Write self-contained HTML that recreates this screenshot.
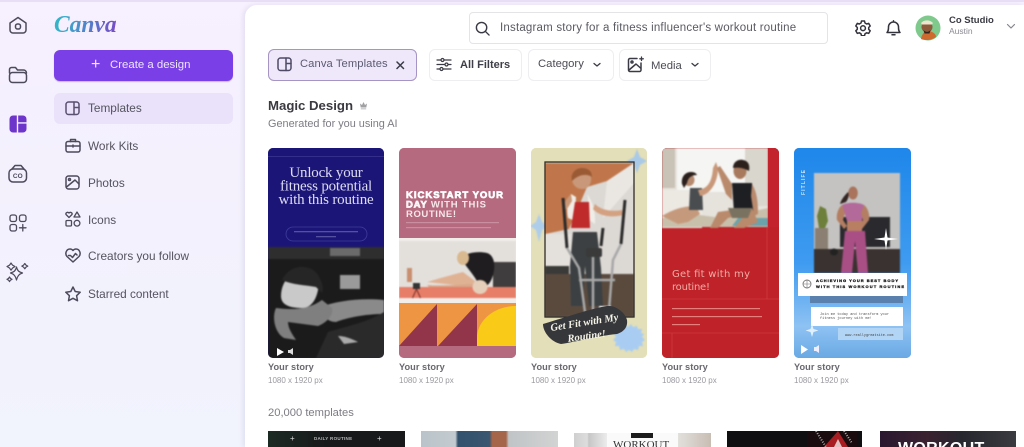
<!DOCTYPE html>
<html><head><meta charset="utf-8">
<style>
*{box-sizing:border-box;margin:0;padding:0}
html,body{width:1024px;height:447px;overflow:hidden}
body{position:relative;font-family:"Liberation Sans",sans-serif;background:linear-gradient(180deg,#f7f0fe 0%,#f3f1fd 50%,#f1f3fd 100%);color:#3d3d48}
#w{position:absolute;left:0;top:0;width:1024px;height:447px;filter:blur(.35px)}
.a{position:absolute;white-space:nowrap}
svg.i{position:absolute;fill:none;stroke:#4d4a5c;stroke-width:1.5;stroke-linecap:round;stroke-linejoin:round}
.nav{font-size:11.800px;color:#55535f;left:88px}
.btn{position:absolute;background:#fff;border:1px solid #eeeef0;border-radius:6px;height:32px;top:49px}
.t1{font-size:9.200px;font-weight:bold;color:#68686e;top:362px;letter-spacing:.05px}
.t2{font-size:8px;color:#9a9aa0;top:376px}
.card{position:absolute;top:148px;width:117px;height:210px;border-radius:5px;overflow:hidden}
.card svg{position:absolute;left:0;top:0}
.ph{filter:blur(.8px)}
</style></head><body><div id="w">
<div class="a" style="left:0;top:0;width:1024px;height:2px;background:#e8def6"></div>
<div class="a" style="left:245px;top:5px;width:779px;height:442px;background:#fff;border-radius:12px 0 0 0;box-shadow:-2px 0 5px rgba(120,110,170,.14)"></div>

<svg class="i" style="left:8px;top:16px" width="20" height="18" viewBox="0 0 20 18"><path d="M2 7 10 1.500 18 7v7a3 3 0 0 1-3 3H5a3 3 0 0 1-3-3z"/><rect x="7.500" y="8" width="5" height="5" rx="2"/></svg>
<svg class="i" style="left:8px;top:65px" width="20" height="19" viewBox="0 0 20 19"><path d="M1.500 8V4.500a2 2 0 0 1 2-2h4l2 2.500h6a3 3 0 0 1 3 3"/><rect x="1.500" y="7.500" width="17" height="10" rx="3"/></svg>
<svg style="position:absolute;left:9px;top:115px" width="18" height="18" viewBox="0 0 18 18"><path fill="#6d35c9" d="M4 0.500h3.800v17H4a3.500 3.500 0 0 1-3.500-3.500V4A3.500 3.500 0 0 1 4 0.500zM9.200 0.500H14A3.500 3.500 0 0 1 17.500 4v3.200H9.200zM9.200 8.600h8.300V14a3.500 3.500 0 0 1-3.500 3.500H9.200z"/></svg>
<svg class="i" style="left:8px;top:164px" width="20" height="19" viewBox="0 0 20 19"><rect x="1" y="5" width="17.500" height="13" rx="4"/><path d="M4 5l3-3.500h6l3 3.500"/><text x="9.800" y="14" font-size="6.500" font-weight="bold" text-anchor="middle" fill="#4d4a5c" stroke="none">CO</text></svg>
<svg class="i" style="left:9px;top:214px;stroke-width:1.300" width="18" height="18" viewBox="0 0 18 18"><rect x="1" y="1" width="6.500" height="6.500" rx="2"/><rect x="10.500" y="1" width="6.500" height="6.500" rx="2"/><rect x="1" y="10.500" width="6.500" height="6.500" rx="2"/><path d="M10.500 13.800h6.500M13.800 10.500V17"/></svg>
<svg class="i" style="left:6px;top:261px;stroke-width:1.200" width="23" height="22" viewBox="0 0 23 22"><path d="M11.500 7c1 4 2.500 5 6 6-3.500 1-5 3-6 7-1-4-2.500-6-6-7 3.500-1 5-2 6-6z" transform="translate(-1 -1)"/><path d="M5 2l1.600 2.200L9 5.500 6.600 7 5 9.200 3.500 7 1 5.500l2.500-1.300zM18.800 2.500l1.200 1.600 1.800 1-1.800 1-1.200 1.700-1.200-1.700-1.800-1 1.800-1zM3.500 16l1 1.500 1.500.8-1.500.8-1 1.500-1-1.500-1.500-.8 1.500-.8z"/></svg>

<div class="a" style="left:54px;top:11px;font-family:'Liberation Serif',serif;font-style:italic;font-weight:bold;font-size:23.500px;line-height:26px;transform-origin:left top;transform:scaleY(1.050);background:linear-gradient(100deg,#32bcc6 0%,#4a8ccb 45%,#7a46c4 100%);-webkit-background-clip:text;background-clip:text;color:transparent">Canva</div>

<div class="a" style="left:54px;top:50px;width:179px;height:31px;background:#7b3fe8;border-radius:6px;box-shadow:0 1px 1px rgba(90,40,180,.3)"></div>
<div class="a" style="left:91px;top:57px;font-size:16px;line-height:16px;color:#f0e8ff">+</div>
<div class="a" style="left:110px;top:58.500px;font-size:11.400px;color:#eee5ff">Create a design</div>

<div class="a" style="left:54px;top:93px;width:179px;height:31px;background:#e9e2fa;border-radius:6px"></div>
<svg class="i" style="left:65px;top:101px;stroke:#5a5070" width="15" height="15" viewBox="0 0 15 15"><rect x="1" y="1" width="13" height="12.500" rx="2.500"/><path d="M9 1v12.500M9 6.500h5"/></svg>
<div class="a nav" style="top:100.500px">Templates</div>

<svg class="i" style="left:65px;top:138px" width="16" height="15" viewBox="0 0 16 15"><rect x="1" y="3.500" width="14" height="10.500" rx="2"/><path d="M5.500 3.500V1.500h5v2M1 8h14M8 7v2"/></svg>
<div class="a nav" style="top:138.500px">Work Kits</div>
<svg class="i" style="left:65px;top:175px" width="15" height="15" viewBox="0 0 15 15"><rect x="1" y="1" width="13" height="13" rx="2.500"/><path d="M1.500 12 10 5l4 4"/><circle cx="4.500" cy="4.500" r="1"/></svg>
<div class="a nav" style="top:175.500px">Photos</div>
<svg class="i" style="left:65px;top:211px;stroke-width:1.300" width="16" height="16" viewBox="0 0 16 16"><path d="M4 6.500 1 3.500c-.7-1.500 1.500-3 3-1.500 1.500-1.500 3.700 0 3 1.500zM12 1l3 5H9z"/><rect x="1" y="9.500" width="5.500" height="5.500" rx="1"/><circle cx="12" cy="12.200" r="2.900"/></svg>
<div class="a nav" style="top:212.500px">Icons</div>
<svg class="i" style="left:65px;top:248px" width="16" height="15" viewBox="0 0 16 15"><path d="M8 14 2 8.500C-.5 5.500 1.500 1 5 1c1.300 0 2.300.6 3 1.500C8.700 1.600 9.700 1 11 1c3.500 0 5.500 4.500 3 7.500z"/><path d="M3.500 7.500h2l2 2 3-4 1.500 1.500"/></svg>
<div class="a nav" style="top:248.500px">Creators you follow</div>
<svg class="i" style="left:65px;top:286px" width="16" height="16" viewBox="0 0 16 16"><path d="m8 1 2.200 4.500 5 .7-3.600 3.500.9 5L8 12.300l-4.500 2.400.9-5L.8 6.200l5-.7z"/></svg>
<div class="a nav" style="top:287px">Starred content</div>

<!-- search -->
<div class="a" style="left:469px;top:12px;width:359px;height:32px;background:#fff;border:1px solid #e4e4e6;border-radius:4px"></div>
<svg class="i" style="left:475px;top:21px;stroke:#3a3a44" width="15" height="15" viewBox="0 0 16 16"><circle cx="7" cy="7" r="5.500"/><path d="m11 11 4 4"/></svg>
<div class="a" style="left:500px;top:21.500px;font-size:11.500px;color:#5a5a63;letter-spacing:.2px">Instagram story for a fitness influencer's workout routine</div>

<svg class="i" style="left:855px;top:20px;stroke:#33333c" width="16" height="16" viewBox="0 0 16 16"><path d="M6.500 1h3l.5 2 1.700 1 2-.6 1.500 2.600-1.500 1.500v1.800l1.500 1.500-1.500 2.600-2-.6-1.700 1-.5 2h-3l-.5-2-1.700-1-2 .6L.8 10.800 2.300 9.300V7.500L.8 6l1.500-2.600 2 .6L6 3z"/><circle cx="8" cy="8.200" r="2.400"/></svg>
<svg class="i" style="left:886px;top:20px;stroke:#33333c" width="15" height="16" viewBox="0 0 15 16"><path d="M1 12.500c1.500-1.500 1.500-3 1.500-5.500a5 5 0 0 1 10 0c0 2.500 0 4 1.500 5.500zM6 14.800h3M7.500 1V.8"/></svg>
<svg style="position:absolute;left:915px;top:15px" width="26" height="26" viewBox="0 0 26 26"><circle cx="13" cy="13" r="12.500" fill="#7fc98d"/><path d="M6 24c1-6 4-8 7-8s8 2 8 6c-4 3-10 4-15 2z" fill="#cf6a2e"/><circle cx="12" cy="12" r="5.500" fill="#8d5a3c"/><path d="M6 8c3-3.500 9-3.500 12 0l-1 1.500H7z" fill="#ece6d0"/><path d="M8.500 15c2 2.500 5 2.500 7 0l-1 3.500h-5z" fill="#2d2320"/></svg>
<div class="a" style="left:949px;top:15px;font-size:9.500px;font-weight:bold;color:#3a3a44">Co Studio</div>
<div class="a" style="left:949px;top:26px;font-size:8.500px;color:#8b8b93">Austin</div>
<svg class="i" style="left:1006px;top:23px;stroke:#85858d;stroke-width:1.200" width="10" height="7" viewBox="0 0 10 7"><path d="m1.500 1.500 3.500 3.500 3.500-3.500"/></svg>

<!-- filters -->
<div class="a" style="left:268px;top:49px;width:149px;height:32px;background:#efe8fb;border:1px solid #a694c4;border-radius:6px"></div>
<svg class="i" style="left:277px;top:57px;stroke:#4f4a66" width="15" height="15" viewBox="0 0 15 15"><rect x="1" y="1" width="13" height="12.500" rx="2.500"/><path d="M9 1v12.500M9 6.500h5"/></svg>
<div class="a" style="left:300px;top:58px;font-size:11.200px;color:#5b5a70;letter-spacing:.1px">Canva Templates</div>
<svg class="i" style="left:396px;top:61px;stroke:#3a3a48;stroke-width:1.500" width="9" height="9" viewBox="0 0 9 9"><path d="m1 1 6.500 6.500M7.500 1 1 7.500"/></svg>

<div class="btn" style="left:429px;width:93px"></div>
<svg class="i" style="left:436px;top:57px;stroke:#3a3a44;stroke-width:1.200" width="16" height="15" viewBox="0 0 16 15"><path d="M1 3h4M8 3h7M1 7.500h8M12 7.500h3M1 12h3M7 12h8"/><circle cx="6.500" cy="3" r="1.500"/><circle cx="10.500" cy="7.500" r="1.500"/><circle cx="5.500" cy="12" r="1.500"/></svg>
<div class="a" style="left:460px;top:59px;font-size:11px;font-weight:bold;color:#3e3e48">All Filters</div>
<div class="btn" style="left:528px;width:86px"></div>
<div class="a" style="left:538px;top:58px;font-size:11.300px;color:#4c4c56">Category</div>
<svg class="i" style="left:592px;top:62px;stroke:#3a3a44;stroke-width:1.300" width="10" height="6" viewBox="0 0 10 6"><path d="m2 1.500 3 2.500 3-2.500"/></svg>
<div class="btn" style="left:619px;width:92px"></div>
<svg class="i" style="left:627px;top:56px;stroke:#3a3a44" width="17" height="17" viewBox="0 0 17 17"><path d="M10 2.500H3a1.500 1.500 0 0 0-1.500 1.500v10A1.500 1.500 0 0 0 3 15.500h9.500A1.500 1.500 0 0 0 14 14V7"/><path d="m2 14 7-6 4.500 4"/><circle cx="5" cy="6" r="1"/><path d="M14.500 1v3.500M12.800 2.800h3.500" stroke-width="1.300"/></svg>
<div class="a" style="left:651px;top:59.500px;font-size:11.300px;color:#4c4c56">Media</div>
<svg class="i" style="left:690px;top:62px;stroke:#3a3a44;stroke-width:1.300" width="10" height="6" viewBox="0 0 10 6"><path d="m2 1.500 3 2.500 3-2.500"/></svg>

<div class="a" style="left:268px;top:97.500px;font-size:13.200px;font-weight:bold;color:#3a3a40">Magic Design</div>
<svg style="position:absolute;left:359px;top:101px" width="9" height="9" viewBox="0 0 9 9"><path fill="#a0a0a4" d="M1 2.500 3 4l1.500-3L6 4l2-1.500L7.300 6.500H1.700zM1.800 7.500h5.400V8.300H1.800z"/></svg>
<div class="a" style="left:268px;top:117.500px;font-size:10.900px;color:#7c7c83">Generated for you using AI</div>

<!-- Card 1 -->
<div class="card" style="left:268px;width:116px;background:#1b1577">
<svg width="116" height="210" viewBox="0 0 116 210">
<rect width="116" height="99" fill="#1b1577"/><rect y="8" width="116" height="1" fill="#322e8a"/>
<g class="ph">
<rect y="99" width="116" height="111" fill="#1b1b1b"/>
<rect y="99" width="116" height="12" fill="#2e2e2e"/><rect x="62" y="100" width="30" height="8" fill="#6a6a6a"/><rect x="72" y="127" width="20" height="14" fill="#9a9a9a"/>
<path d="M50 160c20-8 44-10 66-8v14c-20 0-38 4-48 8-8 0-14-6-18-14z" fill="#8a8a8a"/>
<path d="M8 160c-4 8-2 24 8 30l12 2c-4-6-8-12-8-18l30 4c10-4 16-12 14-18l-10-8c-14 10-30 10-46 8z" fill="#7f7f7f"/>
<path d="M13 148c0-14 10-26 24-26 10 0 15 10 13 20-2 10-7 18-16 18-10 0-21-2-21-12z" fill="#c9c9c9"/>
<path d="M14 132c5-10 14-14 22-13 10 1 14 7 16 12 2 4 4 8 2 14l-6-6c-10-2-24-2-34-7z" fill="#262626"/>
<path d="M60 184c20-6 40-10 56-20v46H48z" fill="#2a2a2a"/>
<path d="M70 188c8 0 16 4 20 6l-14 2z" fill="#aaa"/>
</g>
<path d="M9 200v8l7-4z" fill="#fff"/><path d="M20 202h2l3-2v7l-3-2h-2z" fill="#ddd"/>
<rect x="18" y="79" width="81" height="14" rx="7" fill="none" stroke="#3f3c9c" stroke-width=".8"/>
<rect x="26" y="83" width="64" height="1.300" fill="#54519f"/><rect x="48" y="88" width="20" height="1.300" fill="#54519f"/>
<g font-family="Liberation Serif,serif" font-size="15" fill="#dcdcf2" text-anchor="middle" letter-spacing="-.2"><text x="58" y="29">Unlock your</text><text x="58" y="42.500">fitness potential</text><text x="58" y="56">with this routine</text></g>
</svg></div>

<!-- Card 2 -->
<div class="card" style="left:399px;background:#b56a7f">
<svg width="117" height="210" viewBox="0 0 117 210">
<rect width="117" height="210" fill="#b56a7f"/><rect y="90" width="117" height="65" fill="#f1eeea"/>
<g class="ph">
<rect y="93" width="117" height="46" fill="#e3e0dc"/><rect x="94" y="114" width="23" height="25" fill="#3f3d3d"/>
<rect y="139" width="117" height="11" fill="#e77e68"/>
<path d="M28 134c10-3 24-7 36-10l12 9-2 6z" fill="#e0b294"/>
<path d="M28 137c14 1 30 0 46-1l2 3H30z" fill="#d6a88a"/>
<path d="M62 110c6-6 18-7 26-5 7 2 9 12 6 22-2 8-7 14-14 12-2-10-12-18-18-29z" fill="#1f1d1f"/>
<ellipse cx="64" cy="110" rx="6" ry="7" fill="#d9b98f"/>
<ellipse cx="81" cy="139" rx="7.500" ry="7" fill="#e6cfba"/>
<rect x="14" y="135" width="7" height="6" fill="#333"/><path d="M17.500 141l-4 9M17.500 141l4 9" stroke="#7b2f28" stroke-width="1"/>
<rect x="8" y="120" width="5" height="14" fill="#c98f70"/>
</g>
<rect y="155" width="117" height="43" fill="#ee9544"/>
<path d="M0 198 38 156V198zM39 198 78 156V198z" fill="#93354a"/>
<path d="M78 198V190a39 32 0 0 1 39-32v40z" fill="#f9cb18"/>
<text x="7" y="50" font-size="9.500" font-weight="900" fill="#fff" stroke="#fff" stroke-width=".7" textLength="97">KICKSTART YOUR</text>
<text x="7" y="59.500" font-size="9.500" font-weight="bold" fill="#f7e7ea" textLength="80"><tspan stroke="#fff" stroke-width=".7">DAY</tspan> WITH THIS</text>
<text x="7" y="69" font-size="9.500" font-weight="bold" fill="#f7e7ea" textLength="50">ROUTINE!</text>
<rect x="7" y="74" width="93" height="1.200" fill="#c98ea0"/><rect x="7" y="79" width="85" height="1.200" fill="#c98ea0"/>
</svg></div>

<!-- Card 3 -->
<div class="card" style="left:531px;width:116px;background:#e5e1b9">
<svg width="116" height="210" viewBox="0 0 116 210">
<rect width="116" height="210" fill="#e3dfb8"/>
<g class="ph">
<path d="M106 1l3 8 7 4-7 4-3 8-3-8-7-4 7-4z" fill="#a9c9e6"/>
<path d="M8 66l3 8 6 4-6 4-3 12-3-12-6-4 6-4z" fill="#aecdea"/>
<rect x="14" y="15" width="89" height="154" fill="#dcd8d4"/>
<path d="M14 15h89l-27 18-20 6-12 28-6 14-24 5z" fill="#c0764a"/>
<path d="M76 33l27-18v20L72 70z" fill="#eae6e2"/>
<rect x="14" y="86" width="26" height="34" fill="#e4e0dc"/>
<rect x="14" y="126" width="89" height="43" fill="#5a4a3e"/><rect x="14" y="118" width="24" height="8" fill="#3a3a38"/>
<path d="M41 32c1-8 6-11 10-11 6 0 10 4 9 12-1 5-4 8-8 8-6 0-10-3-11-9z" fill="#c9987a"/>
<path d="M41 33c-2-8 4-13 10-13 6 0 10 3 10 9-6-4-14-2-20 4z" fill="#9a5a34"/>
<path d="M40 46c-3 6-5 14-3 24l7 3 1-24zM56 46c5 6 9 18 8 30l-6-4-1-22z" fill="#f0ece6"/>
<path d="M44 54l14 0 1 26H40z" fill="#bf2a2a"/>
<path d="M64 56c6 6 16 8 27 6l1 5c-12 3-24 1-30-6z" fill="#d3a181"/>
<path d="M40 46c-3 3-7 8-8 14l4 1 5-8z" fill="#c99776"/>
<path d="M42 84h24l4 36 2 38H58l-4-40-2 40H40l-1-40z" fill="#3c4042"/>
<g fill="none" stroke="#2a2a2a" stroke-width="3"><path d="M32 50 36 100"/><path d="M94 52 90 96"/><path d="M72 80l-2 18"/></g>
<g fill="none" stroke="#a8a8a8" stroke-width="2.500"><path d="M36 100l12 20 6 44M90 96 82 112l-4 50M62 108v56M48 132h36"/></g>
<rect x="55" y="100" width="16" height="9" rx="2" fill="#3a3a3a"/><rect x="68" y="158" width="12" height="7" fill="#f5f5f5"/>
<path d="M94 177l3 2 3-3 2 3 4-1 1 3 4 0-1 4 3 1-2 3 3 3-3 2 1 4-4 0-1 4-4-1-2 3-3-2-3 2-2-3-4 1-1-4-4 0 1-4-3-2 3-3-2-3 4-1 0-4 4 1z" fill="#a9cdf2"/>
</g>
<rect x="14" y="14" width="89" height="155" fill="none" stroke="#2f2b2a" stroke-width="1.300"/>
<path d="M12 176c20-6 50-16 64-18 8-1 18 6 20 14 1 8-4 12-10 14-20 2-42 8-56 10-10-2-18-12-18-20z" fill="#36373a"/>
<g font-family="Liberation Serif,serif" font-style="italic" font-weight="bold" font-size="10.500" fill="#f5f3e8"><text x="20" y="183" transform="rotate(-9 20 183)">Get Fit with My</text><text x="37" y="194" transform="rotate(-8 37 194)">Routine!</text></g>
</svg></div>

<!-- Card 4 -->
<div class="card" style="left:662px;background:#c2232c">
<svg width="117" height="210" viewBox="0 0 117 210">
<rect width="117" height="210" fill="#bf2229"/>
<g class="ph">
<rect width="106" height="79" fill="#e6e2dc"/>
<rect x="15" width="68" height="44" fill="#f5f5f3"/><rect width="13" height="40" fill="#c9c2b6"/><rect x="83" width="23" height="58" fill="#d9d6ce"/>
<rect y="42" width="40" height="38" fill="#ece8e2"/>
<path d="M0 79V70l30-4 30 4 46-10V79z" fill="#c9c0ac"/>
<path d="M76 70H106V78H70z" fill="#6ba3ab"/>
<path d="M0 68c10-6 20-10 34-10l4 8-12 8-10 2z" fill="#c59a7c"/>
<path d="M28 40h12l1 22H27z" fill="#4a4d50"/>
<ellipse cx="27" cy="32" rx="5.500" ry="6" fill="#b58a6e"/><path d="M20 36c-1-7 3-12 9-12 3 0 5 1 6 3-6 0-9 3-10 8l-3 5z" fill="#2a1f1c"/>
<path d="M36 42c8-1 14-6 15-22l3-6 2 6c0 12-6 26-18 28z" fill="#c9987a"/>
<path d="M70 35h20l2 28-20 2z" fill="#1d1f22"/>
<ellipse cx="78" cy="23" rx="6.500" ry="8" fill="#a8795c"/><path d="M71 20c0-6 5-9 10-8 6 1 7 6 6 11-5-3-10-4-16-3z" fill="#2b201c"/>
<path d="M70 36 58 18l-3 2 9 26 6 6zM90 36c5 8 6 18 6 30l-4 2-3-20z" fill="#b98a6c"/>
<path d="M70 62l-14 2-8 16h8l10-10 8-2zM90 60l6 14-14 6h-10l10-12z" fill="#b98a6c"/>
<path d="M66 60h24l-4 10H70z" fill="#7a7260"/>
</g>
<rect x="106" width="11" height="79" fill="#c2232c"/>
<g stroke="#d34448" stroke-width=".6"><path d="M0 151H117M0 185H117M105 79V151M10 185V210"/></g>
<g font-family="DejaVu Sans,sans-serif" font-size="10" fill="#f0aca4"><text x="10" y="129" textLength="78">Get fit with my</text><text x="10" y="142" textLength="38">routine!</text></g>
<g fill="#e5807d"><rect x="10" y="160" width="88" height="1.200"/><rect x="10" y="168" width="90" height="1.200"/><rect x="10" y="176" width="28" height="1.200"/></g>
</svg></div>

<!-- Card 5 -->
<div class="card" style="left:794px;background:#2b8ee8">
<svg width="117" height="210" viewBox="0 0 117 210">
<defs><linearGradient id="g" x1="0" y1="0" x2="0" y2="1"><stop offset="0" stop-color="#1e87ea"/><stop offset=".55" stop-color="#3f9bf0"/><stop offset=".85" stop-color="#8ec2f3"/><stop offset="1" stop-color="#6aa9e4"/></linearGradient></defs>
<rect width="117" height="210" fill="url(#g)"/>
<g class="ph">
<rect x="20" y="25" width="86" height="100" fill="#c4c3c1"/>
<rect x="46" y="69" width="50" height="30" fill="#2a2a2e"/>
<rect x="20" y="101" width="86" height="24" fill="#3a3230"/>
<rect x="21" y="80" width="13" height="21" fill="#8a7f72"/><path d="M23 68l3-10 6 3 2 12-3 7h-6z" fill="#6d7f3a"/>
<ellipse cx="40" cy="104" rx="4" ry="3.500" fill="#222"/>
<ellipse cx="59" cy="45" rx="4.800" ry="6.500" fill="#a9735c"/><path d="M54 44c-4 4-7 8-8 12l6-2c3-4 3-8 2-10z" fill="#332522"/>
<path d="M48 57c5-3 17-3 22 0l-2 16H53z" fill="#b3699a"/>
<path d="M48 57c-4 3-6 10-5 15l7 9 3-3-4-6 2-7zM70 57c4 3 6 10 5 15l-7 9-3-3 4-6-2-7z" fill="#b37e62"/>
<rect x="53" y="73" width="15" height="10" fill="#b87f63"/>
<path d="M51 83h20l3 42H64l-3-32-3 32H47z" fill="#a94f85"/>
</g>
<path d="M92 80l1.500 9.500L104 91l-10.500 1.500L92 102l-1.500-9.500L80 91l10.500-1.500z" fill="#fff"/>
<rect x="16" y="148" width="93" height="7" fill="#5a81ad"/>
<rect x="4" y="125" width="109" height="23" fill="#fff"/>
<circle cx="13" cy="136" r="4" fill="none" stroke="#777" stroke-width=".9"/><path d="M9 136h8M13 132v8" stroke="#777" stroke-width=".6"/>
<text x="22" y="134" font-size="4" font-weight="900" fill="#222" stroke="#222" stroke-width=".35" textLength="82">ACHIEVING YOUR BEST BODY</text>
<text x="22" y="140" font-size="4" font-weight="900" fill="#222" stroke="#222" stroke-width=".35" textLength="88">WITH THIS WORKOUT ROUTINE</text>
<rect x="17" y="159" width="92" height="19" fill="#fff"/>
<text x="26" y="167" font-family="Liberation Mono,monospace" font-size="3.600" fill="#555">Join me today and transform your</text>
<text x="26" y="171" font-family="Liberation Mono,monospace" font-size="3.600" fill="#555">fitness journey with me!</text>
<rect x="44" y="180" width="65" height="12" fill="#b2d5f6"/><text x="51" y="188" font-family="Liberation Mono,monospace" font-size="3.500" fill="#444">www.reallygreatsite.com</text>
<path d="M18 176l1.500 5 5 1.500-5 1.500-1.500 5-1.500-5-5-1.500 5-1.500z" fill="#e2f0fd"/>
<path d="M7 197v9l7-4.500z" fill="#fff"/><path d="M20 199h2l3-2v8l-3-2h-2z" fill="#eef"/>
<text x="0" y="0" transform="translate(11 47) rotate(-90)" font-size="5" font-weight="bold" fill="#cfe6fb" textLength="25">FITLIFE</text>
</svg></div>

<div class="a t1" style="left:268px">Your story</div><div class="a t2" style="left:268px">1080 x 1920 px</div>
<div class="a t1" style="left:399px">Your story</div><div class="a t2" style="left:399px">1080 x 1920 px</div>
<div class="a t1" style="left:531px">Your story</div><div class="a t2" style="left:531px">1080 x 1920 px</div>
<div class="a t1" style="left:662px">Your story</div><div class="a t2" style="left:662px">1080 x 1920 px</div>
<div class="a t1" style="left:794px">Your story</div><div class="a t2" style="left:794px">1080 x 1920 px</div>

<div class="a" style="left:268px;top:407px;font-size:11.200px;color:#7c7c83">20,000 templates</div>

<!-- bottom row -->
<div class="a" style="left:268px;top:431px;width:137px;height:16px;background:#17191a;overflow:hidden">
<div class="a" style="left:0;top:0;width:60px;height:16px;background:linear-gradient(90deg,#1c2a24,#17191a)"></div>
<div class="a" style="left:46px;top:5px;font-size:4.500px;font-weight:bold;color:#b9b9b9;letter-spacing:.3px">DAILY ROUTINE</div>
<div class="a" style="left:22px;top:3px;font-size:8px;color:#ddd">+</div><div class="a" style="left:109px;top:3px;font-size:8px;color:#ddd">+</div></div>
<div class="a" style="left:421px;top:431px;width:137px;height:16px;background:linear-gradient(90deg,#b9c3c9 0,#c3cbd0 25%,#33516d 27%,#3a5670 50%,#a5654a 52%,#a5654a 62%,#c0c4c6 64%,#d2d3d3 100%)"></div>
<div class="a" style="left:574px;top:433px;width:137px;height:14px;background:#fafafa;overflow:hidden">
<div class="a" style="left:0;top:0;width:33px;height:14px;background:linear-gradient(90deg,#cfcfcf,#ddd 40%,#c6c6c6 45%,#ececec)"></div>
<div class="a" style="left:104px;top:0;width:33px;height:14px;background:linear-gradient(90deg,#e2e0dc,#c8bdb3)"></div>
<div class="a" style="left:57px;top:0;width:22px;height:5px;background:#1c1c1c"></div>
<div class="a" style="left:39px;top:6px;font-family:'Liberation Serif',serif;font-size:11px;color:#333">WORKOUT</div></div>
<div class="a" style="left:727px;top:431px;width:135px;height:16px;background:#0f0f12;overflow:hidden">
<div class="a" style="left:80px;top:0;width:50px;height:16px;background:#1a0c0e"></div>
<svg style="position:absolute;left:85px;top:0" width="40" height="16" viewBox="0 0 40 16"><path d="M12 16 26 0l10 16z" fill="#a81d22"/><path d="M26 8l4 8h-8z" fill="#e0c2c2"/><path d="M4 0 14 16M32 0 40 12" stroke="#aaa" stroke-width="2" stroke-dasharray="1 1.500"/></svg></div>
<div class="a" style="left:880px;top:431px;width:136px;height:16px;background:linear-gradient(90deg,#2a1830,#3a2230 35%,#26262e 60%,#3a3a40);overflow:hidden">
<div class="a" style="left:18px;top:9px;font-size:16px;font-weight:bold;color:#fff;letter-spacing:.3px">WORKOUT</div></div>
</div></body></html>
